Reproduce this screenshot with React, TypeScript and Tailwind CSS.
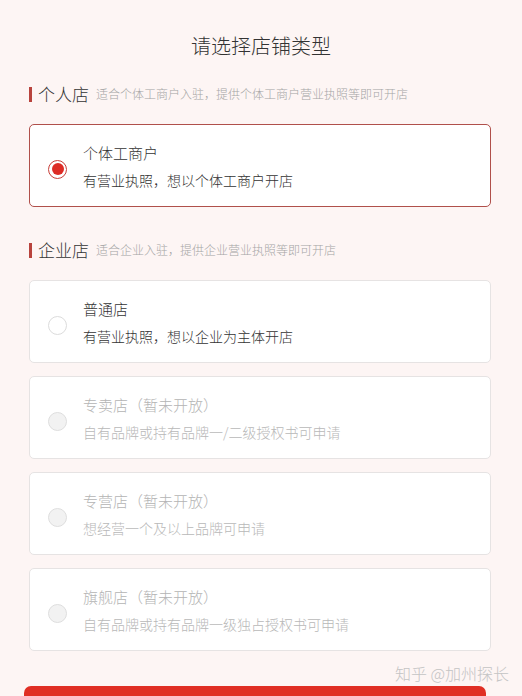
import { useState } from "react";

type ShopType = {
  id: string;
  title: string;
  desc: string;
  disabled?: boolean;
};

const personal: ShopType[] = [
  { id: "individual", title: "个体工商户", desc: "有营业执照，想以个体工商户开店" },
];

const enterprise: ShopType[] = [
  { id: "normal", title: "普通店", desc: "有营业执照，想以企业为主体开店" },
  { id: "exclusive", title: "专卖店（暂未开放）", desc: "自有品牌或持有品牌一/二级授权书可申请", disabled: true },
  { id: "franchise", title: "专营店（暂未开放）", desc: "想经营一个及以上品牌可申请", disabled: true },
  { id: "flagship", title: "旗舰店（暂未开放）", desc: "自有品牌或持有品牌一级独占授权书可申请", disabled: true },
];

function SectionHeader({ title, hint }: { title: string; hint: string }) {
  return (
    <div className="flex h-5 items-center">
      <span className="h-[15px] w-[3px] bg-[#b8433d]" />
      <span className="ml-[6px] text-[17px] leading-5 font-light text-[#333]">{title}</span>
      <span className="ml-[7px] text-[12px] leading-5 font-light text-[#a5a5a5]">{hint}</span>
    </div>
  );
}

function Radio({ checked, disabled }: { checked: boolean; disabled?: boolean }) {
  if (checked) {
    return (
      <span className="mt-[7px] flex h-[19px] w-[19px] shrink-0 items-center justify-center rounded-full border-[1.5px] border-[#c8403a] bg-white">
        <span className="h-[12px] w-[12px] rounded-full bg-[#dd2c25]" />
      </span>
    );
  }
  return (
    <span
      className={`mt-[7px] h-[19px] w-[19px] shrink-0 rounded-full border-[1.5px] ${
        disabled ? "border-[#dedede] bg-[#f2f2f2]" : "border-[#dcdcdc] bg-white"
      }`}
    />
  );
}

function ShopCard({ item, selected, onSelect }: { item: ShopType; selected: boolean; onSelect: () => void }) {
  return (
    <button
      onClick={() => !item.disabled && onSelect()}
      className={`flex h-[83px] w-full items-center rounded-[5px] border bg-white pl-[18px] text-left ${
        selected ? "border-[#b0504b]" : "border-[#e6e3e3]"
      }`}
    >
      <Radio checked={selected} disabled={item.disabled} />
      <div className="ml-[16px] flex flex-col gap-[6px] font-light">
        <span className={`text-[15px] leading-[22px] ${item.disabled ? "text-[#b4b4b4]" : "text-[#333]"}`}>
          {item.title}
        </span>
        <span className={`text-[14px] leading-5 ${item.disabled ? "text-[#b8b8b8]" : "text-[#333]"}`}>
          {item.desc}
        </span>
      </div>
    </button>
  );
}

export default function App() {
  const [selected, setSelected] = useState("individual");

  return (
    <div
      className="min-h-screen overflow-hidden bg-[#fdf5f4]"
      style={{ fontFamily: '"Noto Sans CJK SC", "Noto Sans", sans-serif' }}
    >
      <h1 className="pt-[32px] text-center text-[20px] leading-7 font-light text-[#333]">请选择店铺类型</h1>

      <div className="pl-[29px] pr-[31px]">
        <div className="mt-[24px]">
          <SectionHeader title="个人店" hint="适合个体工商户入驻，提供个体工商户营业执照等即可开店" />
        </div>
        <div className="mt-[20px] flex flex-col gap-[13px]">
          {personal.map((s) => (
            <ShopCard key={s.id} item={s} selected={selected === s.id} onSelect={() => setSelected(s.id)} />
          ))}
        </div>

        <div className="mt-[33px]">
          <SectionHeader title="企业店" hint="适合企业入驻，提供企业营业执照等即可开店" />
        </div>
        <div className="mt-[20px] flex flex-col gap-[13px]">
          {enterprise.map((s) => (
            <ShopCard key={s.id} item={s} selected={selected === s.id} onSelect={() => setSelected(s.id)} />
          ))}
        </div>
      </div>

      <div className="mt-[12px] flex justify-end pr-[13px]">
        <span className="text-[16px] leading-5 font-light text-[#c4c4c4]">知乎 @加州探长</span>
      </div>

      <div className="mt-[3px] pl-[24px] pr-[36px]">
        <button aria-label="下一步" className="h-[48px] w-full rounded-[7px] bg-[#e02e24]" />
      </div>
    </div>
  );
}
